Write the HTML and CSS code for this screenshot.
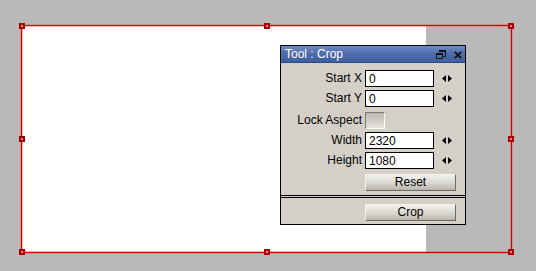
FILE: index.html
```html
<!DOCTYPE html>
<html>
<head>
<meta charset="utf-8">
<link rel="stylesheet" href="styles.css">
</head>
<body>
<div class="canvas">
  <div class="image"></div>
  <div class="sel">
    <span class="h h-tl"></span><span class="h h-tm"></span><span class="h h-tr"></span>
    <span class="h h-ml"></span><span class="h h-mr"></span>
    <span class="h h-bl"></span><span class="h h-bm"></span><span class="h h-br"></span>
  </div>
  <div class="panel">
    <div class="titlebar">
      <span class="title">Tool : Crop</span>
      <span class="tbtns">
        <svg class="restore" width="10" height="9" viewBox="0 0 10 9"><rect x="3" y="0" width="7" height="2" fill="#111"/><path d="M9.5 2V6.5H7.5" fill="none" stroke="#111"/><rect x="0" y="3" width="7" height="2" fill="#111"/><path d="M0.5 5V8.5H6.5V5" fill="none" stroke="#111"/></svg>
        <svg class="close" width="8" height="8" viewBox="0 0 8 8"><path d="M0.8 0.8L7.2 7.2M7.2 0.8L0.8 7.2" stroke="#111" stroke-width="1.9"/></svg>
      </span>
    </div>
    <div class="body">
      <div class="grid">
        <label class="lbl">Start X</label><input class="field" value="0"><svg class="arr" width="10" height="7" viewBox="0 0 10 7"><path d="M0 3.5L4 0V7Z M10 3.5L6 0V7Z" fill="#000"/></svg>
        <label class="lbl">Start Y</label><input class="field" value="0"><svg class="arr" width="10" height="7" viewBox="0 0 10 7"><path d="M0 3.5L4 0V7Z M10 3.5L6 0V7Z" fill="#000"/></svg>
        <label class="lbl lbl-check">Lock Aspect</label><span class="check"></span><span></span>
        <label class="lbl">Width</label><input class="field" value="2320"><svg class="arr" width="10" height="7" viewBox="0 0 10 7"><path d="M0 3.5L4 0V7Z M10 3.5L6 0V7Z" fill="#000"/></svg>
        <label class="lbl">Height</label><input class="field" value="1080"><svg class="arr" width="10" height="7" viewBox="0 0 10 7"><path d="M0 3.5L4 0V7Z M10 3.5L6 0V7Z" fill="#000"/></svg>
        <span></span><button class="btn btn-reset">Reset</button>
      </div>
    </div>
    <div class="sep"></div>
    <div class="foot">
      <button class="btn">Crop</button>
    </div>
  </div>
</div>
</body>
</html>
```

FILE: styles.css
```css
* { box-sizing: border-box; }
html, body { margin: 0; padding: 0; }
body {
  width: 536px; height: 271px; overflow: hidden;
  background: #b9b9b9;
  font-family: "Liberation Sans", Arial, sans-serif;
  font-size: 12px;
}
.canvas { position: relative; width: 536px; height: 271px; }
.image {
  position: absolute; left: 21px; top: 25px; width: 405px; height: 228px;
  background: #fff;
}
.sel {
  position: absolute; left: 21px; top: 25px; width: 491px; height: 228px;
  border: 1px solid #d00000;
  box-shadow: 0 0 0 1px rgba(240, 90, 90, 0.45), inset 0 0 0 1px rgba(240, 90, 90, 0.45);
}
.h {
  position: absolute; width: 6px; height: 6px;
  background: #f08a8a;
  border: 2px solid #a80000;
}
.h-tl { left: -3px; top: -3px; }
.h-tm { left: 242px; top: -3px; }
.h-tr { right: -3px; top: -3px; }
.h-ml { left: -3px; top: 110px; }
.h-mr { right: -3px; top: 110px; }
.h-bl { left: -3px; bottom: -3px; }
.h-bm { left: 242px; bottom: -3px; }
.h-br { right: -3px; bottom: -3px; }

.panel {
  position: absolute; left: 280px; top: 45px; width: 186px; height: 180px;
  background: #d4d0c8;
  border: 1px solid #000;
  display: flex; flex-direction: column;
}
.titlebar {
  height: 17px; flex: none;
  background: linear-gradient(#6e8dc6, #4e6dab 45%, #3f5e9c);
  border-bottom: 1px solid #2c4a86;
  display: flex; align-items: center; justify-content: space-between;
  padding: 0 3px 0 4px;
  color: #fff;
}
.title { font-size: 12px; line-height: 16px; }
.tbtns { display: flex; gap: 8px; align-items: center; padding-top: 1px; }
.tbtns svg { display: block; }

.body { flex: 1; padding-top: 7px; }
.grid {
  display: grid;
  grid-template-columns: 81px 69px 10px;
  column-gap: 3px;
  row-gap: 3px;
  align-items: center;
}
.grid > .arr { margin-left: 5px; }
.lbl { text-align: right; color: #000; line-height: 17px; white-space: nowrap; }
.lbl-check { margin-top: 2px; }
.field {
  width: 69px; height: 17px;
  border: 1px solid #000;
  background: #fff;
  font: 12px "Liberation Sans", Arial, sans-serif;
  padding: 0 3px; margin: 0;
  color: #000;
}
.check {
  width: 20px; height: 17px;
  border: 1px solid;
  border-color: #7c7a76 #fbfaf8 #fbfaf8 #7c7a76;
  background: linear-gradient(#bdb9b1, #e6e3dd);
  margin-top: 2px;
}
.btn {
  grid-column: 2 / span 2;
  width: 91px; height: 17px;
  margin: 0;
  font: 12px/15px "Liberation Sans", Arial, sans-serif;
  color: #000;
  background: linear-gradient(#f1f0ec, #d9d6cf 55%, #b8b4ac);
  border: 1px solid;
  border-color: #f4f3f0 #6e6b66 #6e6b66 #f4f3f0;
  padding: 0;
}
.btn-reset { margin-top: 2px; }
.sep {
  height: 3px; flex: none;
  border-top: 1px solid #000;
  border-bottom: 1px solid #000;
}
.foot {
  height: 26px; flex: none;
  padding: 6px 0 0 84px;
}
```
